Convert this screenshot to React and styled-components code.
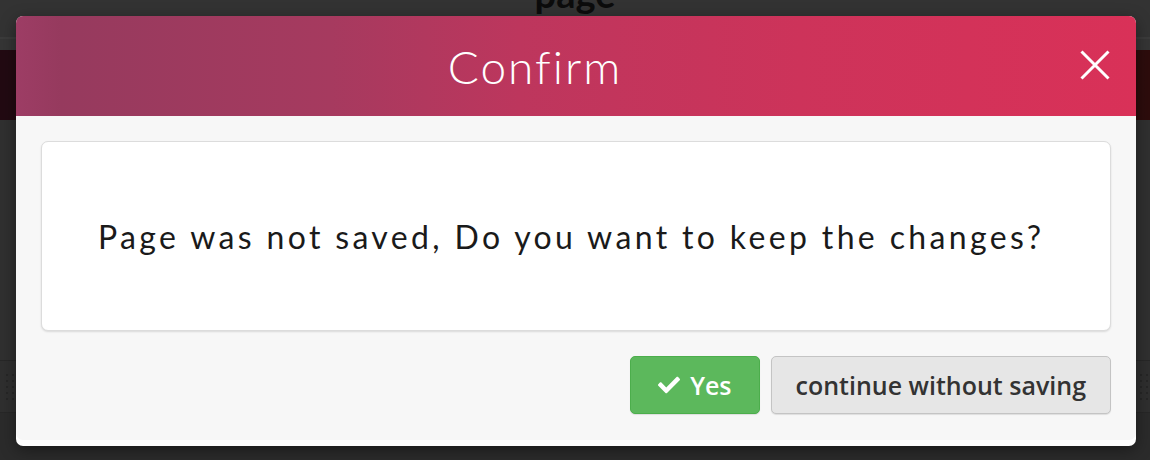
import React from 'react';
import styled, { createGlobalStyle } from 'styled-components';
import { FaCheck } from 'react-icons/fa';

const GlobalStyle = createGlobalStyle`
  html, body {
    margin: 0;
    padding: 0;
    width: 1150px;
    height: 460px;
    overflow: hidden;
    background: #2b2b2b;
  }
  * {
    box-sizing: border-box;
  }
`;

// the page behind the dimmed backdrop
const Page = styled.div`
  width: 1150px;
  height: 460px;
  display: flex;
  flex-direction: column;
  background: #2b2b2b;
  overflow: hidden;
`;

const TopBar = styled.div`
  height: 37px;
  flex-shrink: 0;
  background: #333333;
  display: flex;
  justify-content: center;
  overflow: hidden;
`;

const PageTitle = styled.h1`
  margin: -27px 0 0;
  font-family: Lato, 'Noto Sans', sans-serif;
  font-weight: 700;
  font-size: 38px;
  line-height: 40px;
  color: #0c0c0c;
`;

const SubBar = styled.div`
  height: 13px;
  flex-shrink: 0;
  background: #353535;
  border-top: 2px solid #3b3b3b;
`;

const Band = styled.div`
  height: 70px;
  flex-shrink: 0;
  background: linear-gradient(90deg, #220a12 0%, #260a10 60%, #2d0c0c 100%);
`;

const Main = styled.div`
  height: 240px;
  flex-shrink: 0;
  background: #303030;
`;

const Grip = styled.div`
  height: 53px;
  flex-shrink: 0;
  background: #2f2f2f;
  border-top: 1px solid #272727;
  border-bottom: 1px solid #272727;
  display: flex;
  justify-content: space-between;
  align-items: center;
  padding: 0 2px 0 4px;
`;

const Dots = styled.div`
  width: 10px;
  height: 30px;
  background-image: radial-gradient(circle, #262626 1.2px, transparent 1.6px);
  background-size: 6px 6px;
`;

const Bottom = styled.div`
  flex: 1;
  background: #2b2b2b;
`;

// modal
const Modal = styled.div`
  position: absolute;
  top: 16px;
  left: 16px;
  width: 1120px;
  height: 430px;
  background: #fff;
  border-radius: 7px;
  padding-bottom: 6px;
  display: flex;
  flex-direction: column;
  box-shadow: 0 4px 16px rgba(0, 0, 0, 0.4);
`;

const Header = styled.div`
  height: 100px;
  border-radius: 7px 7px 0 0;
  background: linear-gradient(90deg, #9d3d65 0%, #963a5e 4%, #a63a5f 28%, #bd365d 45%, #cd335a 70%, #d93158 100%);
  display: flex;
  align-items: center;
  justify-content: center;
  padding-right: 82px;
  position: relative;
`;

const Title = styled.h2`
  margin: 0;
  font-family: Lato, 'Noto Sans', sans-serif;
  font-weight: 300;
  font-size: 46px;
  color: #fff;
  letter-spacing: 2px;
`;

const Close = styled.button`
  position: absolute;
  right: 24px;
  top: 32px;
  width: 34px;
  height: 34px;
  padding: 0;
  border: 0;
  background: none;
  cursor: pointer;
  display: flex;
  align-items: center;
  justify-content: center;
`;

const Body = styled.div`
  flex: 1;
  background: #f7f7f7;
  border-radius: 0 0 7px 7px;
  padding: 25px;
  display: flex;
  flex-direction: column;
  gap: 25px;
`;

const Card = styled.div`
  height: 190px;
  background: #fff;
  border: 1px solid #dcdcdc;
  border-radius: 7px;
  box-shadow: 0 1px 2px rgba(0, 0, 0, 0.12);
  display: flex;
  align-items: center;
  padding: 0 56px;
`;

const Message = styled.p`
  margin: 0;
  font-family: Lato, 'Noto Sans', sans-serif;
  font-weight: 400;
  font-size: 32px;
  letter-spacing: 3.35px;
  color: #1a1a1a;
`;

const Actions = styled.div`
  display: flex;
  justify-content: flex-end;
  gap: 11px;
`;

const Button = styled.button`
  height: 58px;
  padding: 0 ${(p) => (p.$primary ? '27px' : '24px')};
  border-radius: 5px;
  border: 1px solid ${(p) => (p.$primary ? '#4cae4c' : '#c4c4c4')};
  background: ${(p) => (p.$primary ? '#5cb85c' : '#e6e6e6')};
  color: ${(p) => (p.$primary ? '#fff' : '#333')};
  font-family: 'Open Sans', 'Noto Sans', sans-serif;
  font-weight: 600;
  font-size: 25px;
  display: flex;
  align-items: center;
  gap: 10px;
  cursor: pointer;
  box-shadow: 0 1px 1px rgba(0, 0, 0, 0.1);
`;

const App = () => (
  <>
    <GlobalStyle />
    <Page>
      <TopBar>
        <PageTitle>page</PageTitle>
      </TopBar>
      <SubBar />
      <Band />
      <Main />
      <Grip>
        <Dots />
        <Dots />
      </Grip>
      <Bottom />
    </Page>
    <Modal>
      <Header>
        <Title>Confirm</Title>
        <Close aria-label="close">
          <svg width="30" height="30" viewBox="0 0 30 30">
            <path d="M1.5 1.5 L28.5 28.5 M28.5 1.5 L1.5 28.5" stroke="#fff" strokeWidth="3" />
          </svg>
        </Close>
      </Header>
      <Body>
        <Card>
          <Message>Page was not saved, Do you want to keep the changes?</Message>
        </Card>
        <Actions>
          <Button $primary>
            <FaCheck size={22} />
            Yes
          </Button>
          <Button>continue without saving</Button>
        </Actions>
      </Body>
    </Modal>
  </>
);

export default App;
